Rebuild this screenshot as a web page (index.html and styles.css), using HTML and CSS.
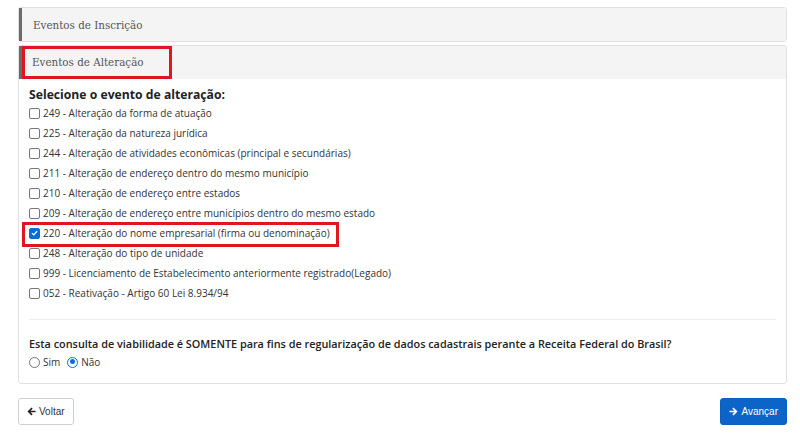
FILE: index.html
```html
<!DOCTYPE html>
<html lang="pt">
<head>
<meta charset="utf-8">
<link rel="stylesheet" href="styles.css">
</head>
<body>
<div class="page">
  <div class="panel">
    <div class="panel-head">Eventos de Inscrição</div>
  </div>
  <div class="panel">
    <div class="panel-head"><span class="hl-title">Eventos de Alteração</span></div>
    <div class="panel-body">
      <div class="label">Selecione o evento de alteração:</div>
      <ul class="opts">
        <li><span class="cb"></span>249 - Alteração da forma de atuação</li>
        <li><span class="cb"></span>225 - Alteração da natureza jurídica</li>
        <li><span class="cb"></span>244 - Alteração de atividades econômicas (principal e secundárias)</li>
        <li><span class="cb"></span>211 - Alteração de endereço dentro do mesmo município</li>
        <li><span class="cb"></span>210 - Alteração de endereço entre estados</li>
        <li><span class="cb"></span>209 - Alteração de endereço entre municípios dentro do mesmo estado</li>
        <li class="hl-item"><span class="cb on"><svg viewBox="0 0 12 12" width="12" height="12"><path d="M2.6 6.2 L5 8.5 L9.4 3.6" fill="none" stroke="#fff" stroke-width="1.7"/></svg></span>220 - Alteração do nome empresarial (firma ou denominação)</li>
        <li><span class="cb"></span>248 - Alteração do tipo de unidade</li>
        <li><span class="cb"></span>999 - Licenciamento de Estabelecimento anteriormente registrado(Legado)</li>
        <li><span class="cb"></span>052 - Reativação - Artigo 60 Lei 8.934/94</li>
      </ul>
      <hr class="sep">
      <div class="question">Esta consulta de viabilidade é SOMENTE para fins de regularização de dados cadastrais perante a Receita Federal do Brasil?</div>
      <div class="radios">
        <span class="rd"></span><span class="rlabel">Sim</span>
        <span class="rd on"></span><span class="rlabel">Não</span>
      </div>
    </div>
  </div>
  <div class="actions">
    <button class="btn btn-default"><svg viewBox="0 0 10 10" width="9" height="9"><path d="M0.5 5 L5 0.6 L6.3 1.9 L3.8 4.1 H9.5 V5.9 H3.8 L6.3 8.1 L5 9.4 Z" fill="#222"/></svg>Voltar</button>
    <button class="btn btn-primary"><svg viewBox="0 0 10 10" width="9" height="9"><path d="M9.5 5 L5 0.6 L3.7 1.9 L6.2 4.1 H0.5 V5.9 H6.2 L3.7 8.1 L5 9.4 Z" fill="#fff"/></svg>Avançar</button>
  </div>
</div>
</body>
</html>
```
FILE: styles.css
```css
*, *::before, *::after { box-sizing: border-box; }
html, body { margin: 0; padding: 0; background: #fff; }
.page {
  padding: 7px 13px 0 18px;
  font-family: "Open Sans", sans-serif;
  color: #333;
}
.panel {
  border: 1px solid #e0e0e0;
  border-radius: 3px;
  margin-bottom: 3px;
  background: #fff;
}
.panel-head {
  background: #f4f4f4;
  border-left: 3px solid #6b6b6b;
  height: 33px;
  display: flex;
  align-items: center;
  padding-left: 11px;
  font-family: "DejaVu Serif", serif;
  font-stretch: semi-condensed;
  font-size: 11.5px;
  color: #555;
}
.hl-title {
  outline: 3px solid #e0151f;
  outline-offset: -3px;
  margin-left: -11px;
  padding: 0 28px 0 10px;
  height: 33px;
  display: flex;
  align-items: center;
  margin-top: -1px;
}
.panel-body {
  padding: 7px 10px 14px 10px;
}
.label {
  font-weight: 700;
  font-size: 12.2px;
  color: #222;
  margin-bottom: 0;
}
.opts { list-style: none; margin: 0; padding: 0; }
.opts li {
  height: 20px;
  display: flex;
  align-items: center;
  font-size: 10px;
  color: #333;
  position: relative;
}
.cb {
  width: 11px;
  height: 11px;
  border: 1px solid #767676;
  border-radius: 2px;
  margin-right: 3px;
  display: inline-flex;
  align-items: center;
  justify-content: center;
  background: #fff;
}
.cb.on { background: #0b6ed8; border-color: #0b6ed8; }
.cb svg { width: 10px; height: 10px; }
.hl-item::after {
  content: "";
  position: absolute;
  left: -7px;
  top: -1px;
  width: 317px;
  height: 25px;
  border: 3px solid #e0151f;
}
.sep {
  border: 0;
  border-top: 1px solid #eee;
  margin: 16px 0 16px 0;
}
.question {
  font-weight: 600;
  font-size: 10.85px;
  color: #222;
  margin-bottom: 4px;
}
.radios { display: flex; align-items: center; font-size: 10px; color: #333; }
.rd {
  width: 11px; height: 11px;
  border: 1px solid #767676;
  border-radius: 50%;
  margin-right: 3px;
  position: relative;
}
.rd.on { border: 1.5px solid #0b6ed8; }
.rd.on::after {
  content: "";
  position: absolute;
  left: 1.5px; top: 1.5px;
  width: 5px; height: 5px;
  border-radius: 50%;
  background: #0b6ed8;
}
.rlabel { margin-right: 7px; }
.actions {
  display: flex;
  justify-content: space-between;
  margin-top: 14px;
}
.btn {
  height: 27px;
  border-radius: 3px;
  font-family: "Liberation Sans", Arial, sans-serif;
  font-size: 10px;
  padding: 0 8px;
  display: inline-flex;
  align-items: center;
  gap: 3px;
}
.btn-default { background: #fff; border: 1px solid #d0d0d0; color: #333; }
.btn-primary { background: #0c64c8; border: 1px solid #0c5fbe; color: #fff; }
```
